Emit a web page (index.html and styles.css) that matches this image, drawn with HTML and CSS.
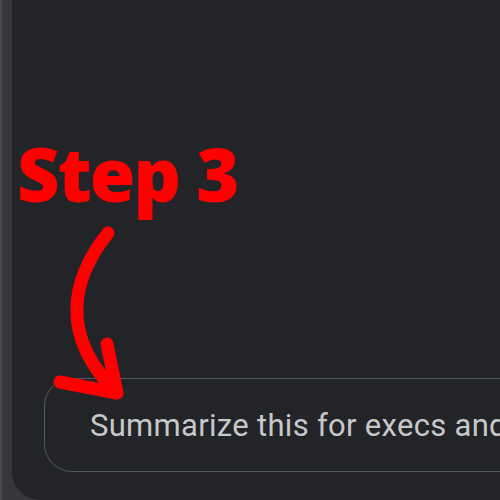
FILE: index.html
```html
<!DOCTYPE html>
<html>
<head>
<meta charset="utf-8">
<link rel="stylesheet" href="styles.css">
</head>
<body>
<div class="frame">
  <div class="panel">
    <div class="prompt">
      <span class="prompt-text">Summarize this for execs and</span>
    </div>
  </div>
  <div class="note-title">Step 3</div>
  <svg class="note-arrow" width="500" height="500" viewBox="0 0 500 500">
    <g fill="none" stroke="#ff0000" stroke-width="13" stroke-linecap="round" stroke-linejoin="round">
      <path d="M108 233 C72 278 58 335 117 393"/>
      <path d="M107 344 L117 393 L60 382"/>
    </g>
  </svg>
</div>
</body>
</html>
```
FILE: styles.css
```css
html, body {
  margin: 0;
  padding: 0;
  width: 500px;
  height: 500px;
  overflow: hidden;
  background: #35373b;
}
.frame {
  position: relative;
  width: 498px;
  height: 500px;
  border-left: 2px solid #48494d;
  display: flex;
}
.panel {
  margin-left: 10px;
  flex: 1;
  height: 500px;
  background: #222428;
  border-bottom-left-radius: 28px;
  display: flex;
  flex-direction: column;
  justify-content: flex-end;
  padding-bottom: 28px;
  box-sizing: border-box;
  overflow: hidden;
}
.prompt {
  margin-left: 32px;
  width: 700px;
  height: 94px;
  box-sizing: border-box;
  border: 1px solid #55585c;
  border-radius: 28px;
  display: flex;
  align-items: center;
  padding-left: 45px;
  flex-shrink: 0;
}
.prompt-text {
  font-family: Roboto, "Liberation Sans", sans-serif;
  font-size: 31px;
  letter-spacing: 0.3px;
  color: #c6c8ca;
  white-space: nowrap;
}
.note-title {
  position: absolute;
  left: 15px;
  top: 137px;
  font-family: "Open Sans", sans-serif;
  font-weight: 800;
  font-size: 74px;
  line-height: 74px;
  letter-spacing: -2px;
  color: #ff0000;
  white-space: nowrap;
}
.note-arrow {
  position: absolute;
  left: -2px;
  top: 0;
}
```
